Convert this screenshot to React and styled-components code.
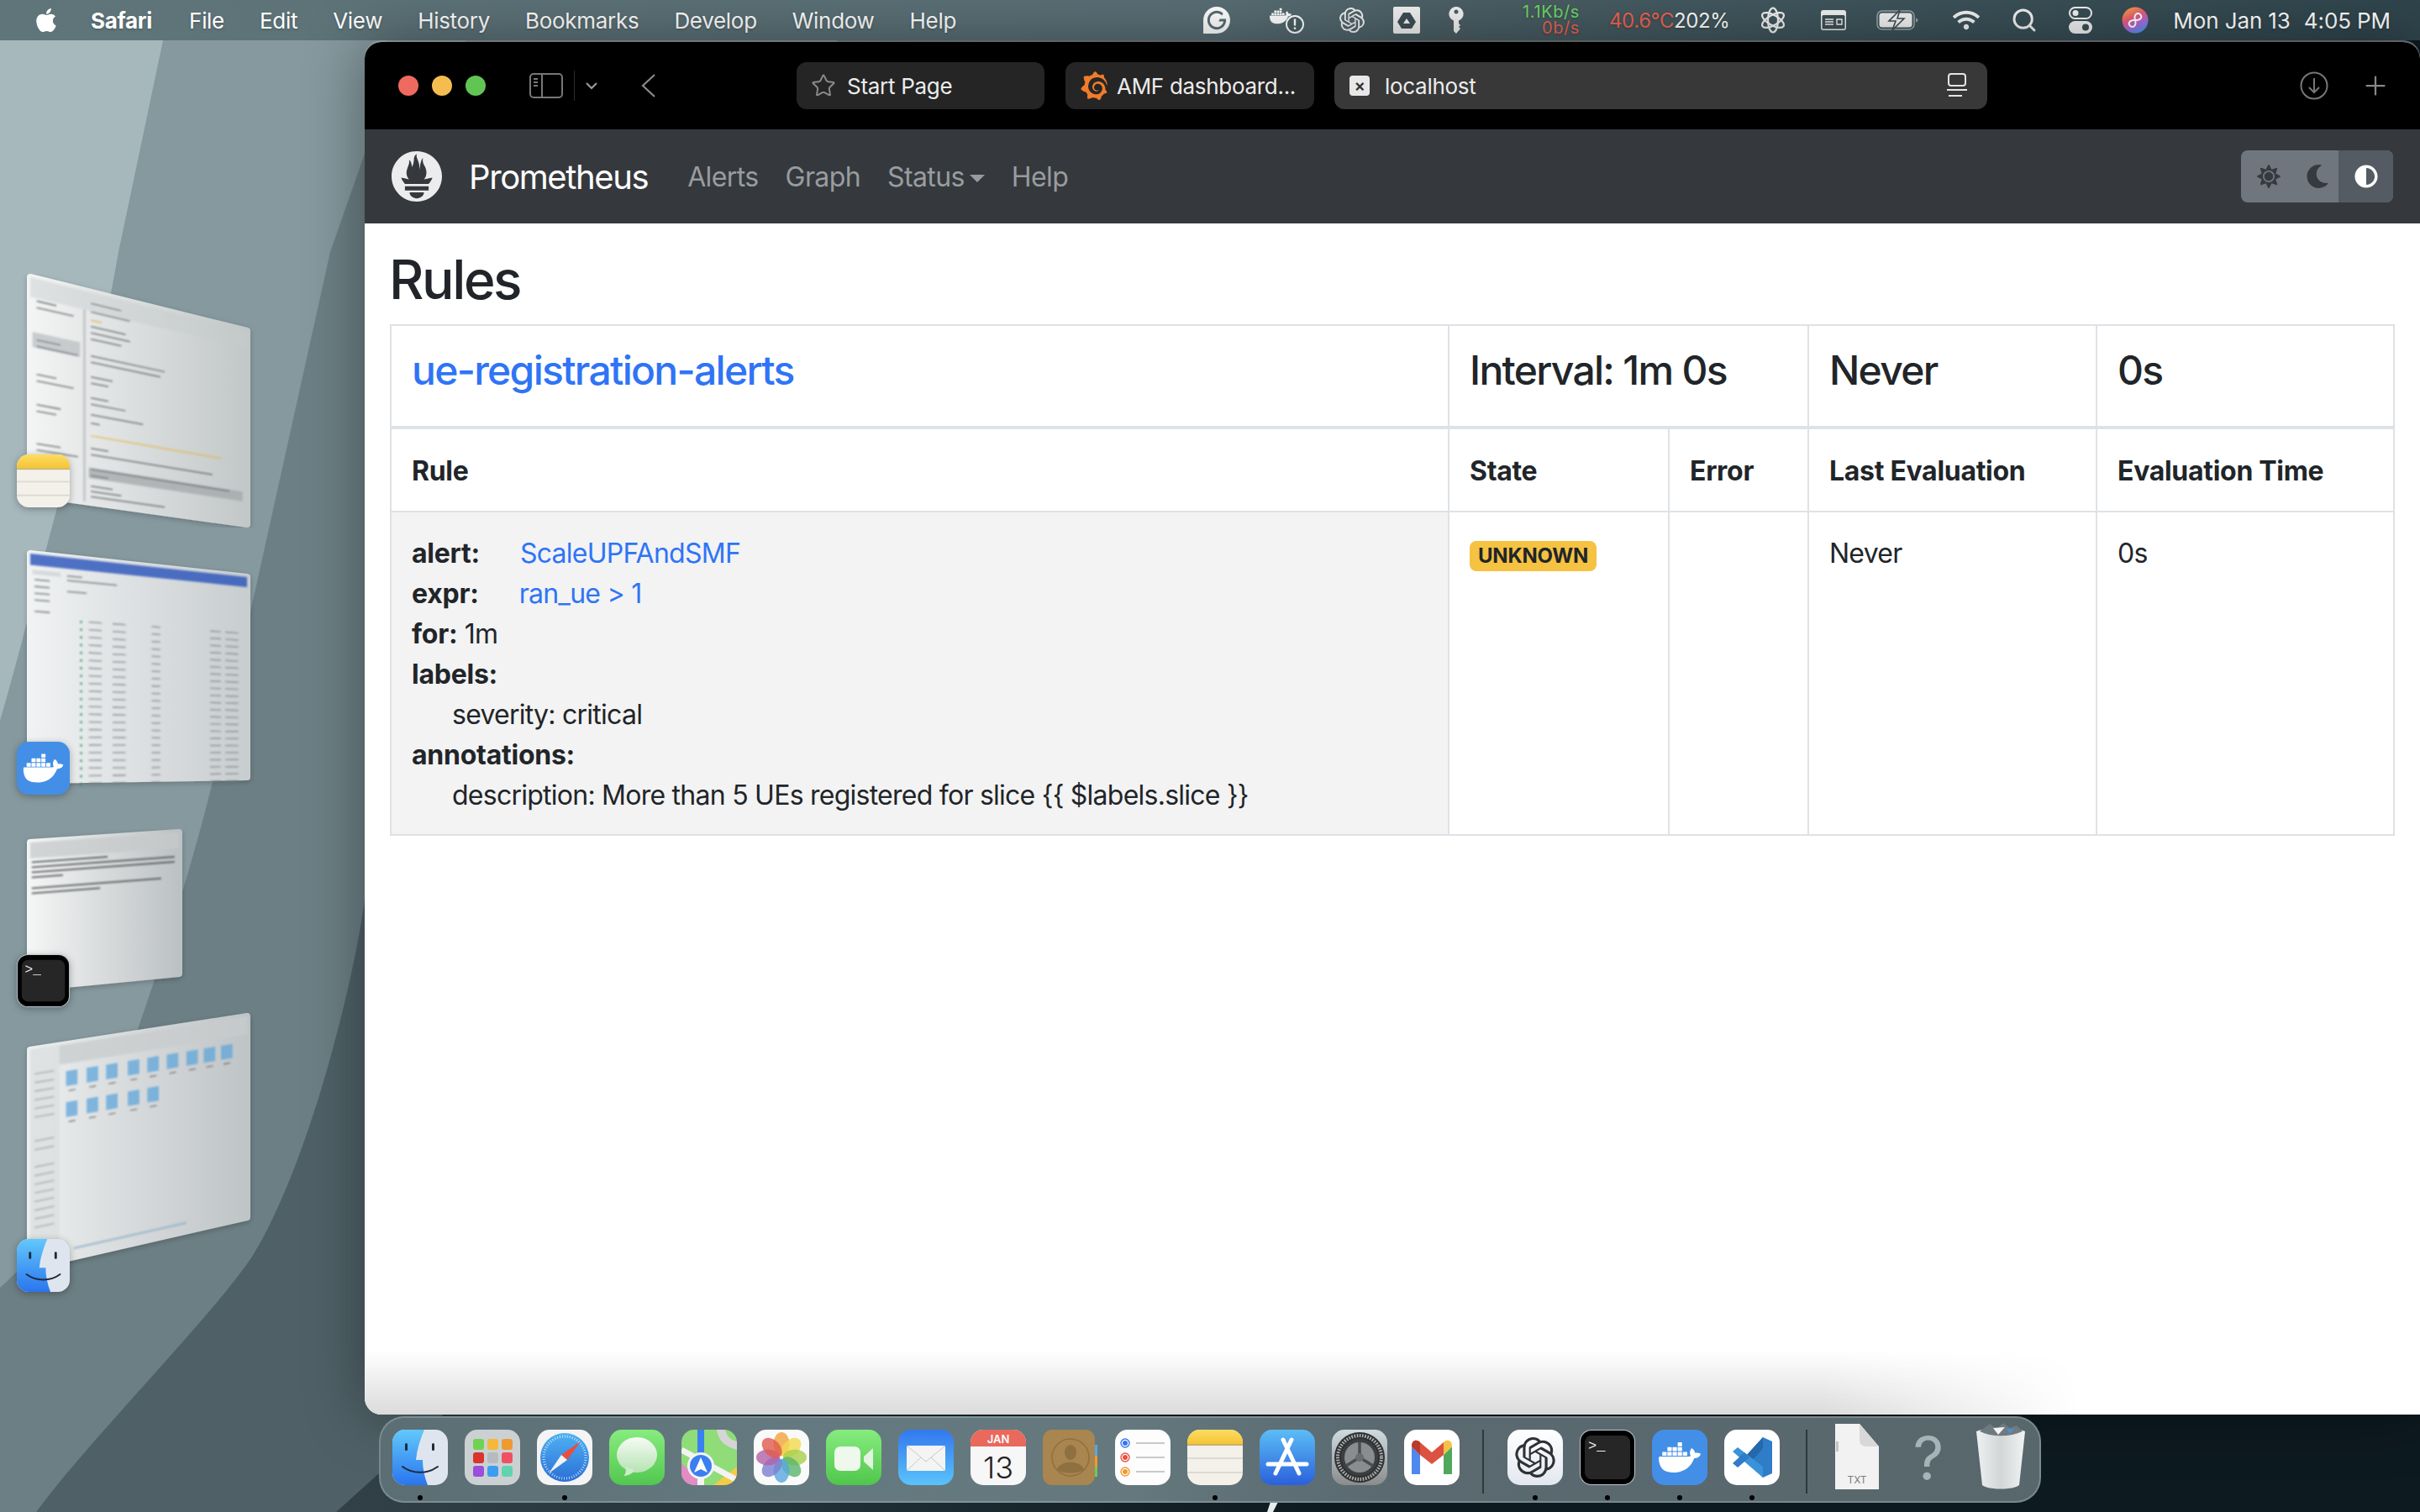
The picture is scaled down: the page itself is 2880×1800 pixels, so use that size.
import React from 'react';
import styled, { createGlobalStyle } from 'styled-components';
import { FaApple, FaSun, FaMoon, FaAdjust, FaWifi } from 'react-icons/fa';
import { SiPrometheus, SiGrafana, SiOpenai, SiDocker, SiGrammarly } from 'react-icons/si';
import { Search, Star, Plus } from 'lucide-react';

const GlobalStyle = createGlobalStyle`
  html, body {
    margin: 0;
    padding: 0;
    background: #0e1b21;
  }
  * {
    box-sizing: border-box;
  }
`;

const Desktop = styled.div`
  position: relative;
  width: 2880px;
  height: 1800px;
  overflow: hidden;
  font-family: Inter, "Liberation Sans", sans-serif;
  color: #212529;
`;

const WallpaperSvg = styled.svg`
  position: absolute;
  left: 0;
  top: 0;
`;

/* ---------- menu bar ---------- */

const MenuBar = styled.header`
  position: relative;
  display: flex;
  align-items: center;
  height: 48px;
  padding: 0 35px 0 39px;
  background: linear-gradient(90deg, #5f757a 0%, #586e74 50%, #4a5e64 60%, #3e545b 75%, #2f444c 100%);
  color: #fff;
  font-size: 26px;
  letter-spacing: -0.3px;
  text-shadow: 0 1px 3px rgba(0, 0, 0, 0.25);
`;

const MenuLeft = styled.nav`
  display: flex;
  align-items: center;
  gap: 42px;
`;

const AppleSlot = styled.span`
  display: flex;
  margin-right: -5px;
`;

const MenuItem = styled.span`
  font-weight: ${(p) => (p.$bold ? 700 : 400)};
  margin-right: ${(p) => (p.$bold ? 2 : 0)}px;
  white-space: nowrap;
`;

const MenuRight = styled.div`
  display: flex;
  align-items: center;
  margin-left: auto;
`;

const StatusSlot = styled.span`
  display: flex;
  justify-content: ${(p) => p.$justify || 'center'};
  align-items: center;
  width: ${(p) => p.$w}px;
  margin-left: ${(p) => p.$ml || 0}px;
  white-space: nowrap;
`;

const NetStack = styled.span`
  display: flex;
  flex-direction: column;
  align-items: flex-end;
  font-size: 20px;
  line-height: 19px;
  letter-spacing: 0.6px;
  color: #6fd764;
`;

const NetDown = styled.span`
  color: #ee6152;
`;

const TempText = styled.span`
  font-size: 24px;
  letter-spacing: -0.4px;
  color: #fff;
`;

const TempHot = styled.span`
  color: #ee6152;
`;

const Clock = styled.span`
  display: flex;
  gap: 16px;
  font-size: 26px;
  letter-spacing: -0.1px;
`;

/* ---------- stage manager strip ---------- */

const Workspace = styled.div`
  position: relative;
  display: flex;
  height: 1752px;
`;

const StageColumn = styled.aside`
  display: flex;
  flex-direction: column;
  flex: 0 0 434px;
  padding-top: 278px;
`;

const StageItem = styled.div`
  position: relative;
  width: 310px;
  height: ${(p) => p.$h}px;
  margin-bottom: ${(p) => p.$gap}px;
`;

const StageBadge = styled.span`
  position: absolute;
  left: 20px;
  top: ${(p) => p.$top}px;
  filter: drop-shadow(0 2px 4px rgba(0, 0, 0, 0.3));
`;

/* ---------- browser window ---------- */

const BrowserWindow = styled.main`
  display: flex;
  flex-direction: column;
  flex: 1;
  height: 1634px;
  margin-top: 2px;
  border-radius: 20px 20px 0 20px;
  overflow: hidden;
  background: #fff;
  box-shadow: 0 0 70px rgba(0, 0, 0, 0.38), 0 -2px 0 rgba(190, 190, 190, 0.55);
`;

const Toolbar = styled.div`
  display: flex;
  align-items: center;
  flex: 0 0 104px;
  padding-left: 40px;
  background: #000;
`;

const Lights = styled.div`
  display: flex;
  gap: 16px;
  margin-right: 52px;
`;

const Light = styled.span`
  width: 24px;
  height: 24px;
  border-radius: 50%;
  background: ${(p) => p.$color};
`;

const ToolIcon = styled.span`
  display: flex;
  margin-left: ${(p) => p.$ml || 0}px;
`;

const ToolDivider = styled.span`
  width: 1px;
  height: 36px;
  margin-left: 13px;
  background: #2b2b2b;
`;

const Tab = styled.div`
  display: flex;
  align-items: center;
  width: ${(p) => p.$w}px;
  height: 56px;
  margin-left: ${(p) => p.$ml}px;
  padding: 0 ${(p) => p.$pr || 12}px 0 ${(p) => p.$pl}px;
  border-radius: 12px;
  background: ${(p) => (p.$active ? '#383838' : '#252525')};
  color: #ececec;
  font-size: 26px;
  letter-spacing: -0.3px;
  white-space: nowrap;
`;

const TabLabel = styled.span`
  margin-left: ${(p) => p.$ml}px;
  flex: 1;
`;

const FavClose = styled.span`
  display: flex;
  align-items: center;
  justify-content: center;
  width: 24px;
  height: 24px;
  border-radius: 4px;
  background: #e8e8e8;
  color: #333;
  font-size: 20px;
  font-weight: 600;
  line-height: 1;
`;

const NavBar = styled.nav`
  display: flex;
  align-items: center;
  flex: 0 0 112px;
  padding: 0 32px;
  background: #35393d;
`;

const Brand = styled.span`
  margin-left: 32px;
  margin-right: 31px;
  color: #fff;
  font-size: 40px;
  letter-spacing: -1.4px;
`;

const NavLink = styled.span`
  padding: 0 16px;
  color: #999c9f;
  font-size: 32px;
  letter-spacing: -0.6px;
`;

const Caret = styled.span`
  display: inline-block;
  margin-left: 6px;
  vertical-align: 5px;
  border-top: 9px solid;
  border-right: 9px solid transparent;
  border-left: 9px solid transparent;
`;

const ThemeToggle = styled.div`
  display: flex;
  margin-left: auto;
  height: 62px;
  border-radius: 8px;
  overflow: hidden;
  background: #6f767e;
`;

const ThemeButton = styled.span`
  display: flex;
  align-items: center;
  justify-content: center;
  width: ${(p) => p.$w}px;
  background: ${(p) => (p.$active ? '#545b62' : 'transparent')};
  color: ${(p) => (p.$active ? '#fff' : '#343a40')};
`;

/* ---------- rules page ---------- */

const Content = styled.section`
  position: relative;
  flex: 1;
  padding: 29px 30px 0 29px;
  background: #fff;

  &::after {
    content: "";
    position: absolute;
    left: 0;
    bottom: 0;
    width: 2040px;
    height: 76px;
    background: linear-gradient(180deg, rgba(0, 0, 0, 0) 0%, rgba(0, 0, 0, 0.14) 100%);
    -webkit-mask-image: linear-gradient(90deg, #000 85%, transparent 100%);
    mask-image: linear-gradient(90deg, #000 85%, transparent 100%);
  }
`;

const PageTitle = styled.h2`
  margin: 0 0 14px;
  font-size: 64px;
  line-height: 1.2;
  font-weight: 500;
  letter-spacing: -2.4px;
`;

const RulesTable = styled.table`
  width: 2384px;
  margin-left: 1px;
  table-layout: fixed;
  border-collapse: collapse;
  font-size: 32px;
  line-height: 48px;
  letter-spacing: -0.75px;
`;

const Col = styled.col`
  width: ${(p) => p.$w}px;
`;

const Cell = styled.td`
  padding: 24px;
  border: 2px solid #dee2e6;
  vertical-align: top;
  background: #fff;
`;

const BodyCell = styled(Cell)`
  padding: 25px 24px 22px;
  background: ${(p) => (p.$shaded ? '#f3f3f3' : '#fff')};
`;

const HeadRow = styled.tr`
  & > td {
    border-bottom-width: 4px;
  }
`;

const HeadCell = styled.th`
  padding: 26px 24px 23px;
  border: 2px solid #dee2e6;
  border-top: 0;
  text-align: left;
  font-weight: 700;
  letter-spacing: -0.3px;
  background: #fff;
`;

const GroupTitle = styled.h4`
  margin: 0 0 14px;
  font-size: 48px;
  line-height: 1.2;
  font-weight: 500;
  letter-spacing: -1.7px;
`;

const GroupLink = styled.span`
  color: #2f74f6;
`;

const RuleLine = styled.div`
  padding-left: ${(p) => (p.$indent ? 48 : 0)}px;
`;

const RuleKey = styled.b`
  font-weight: 700;
  letter-spacing: -0.25px;
`;

const RuleLink = styled.span`
  margin-left: ${(p) => p.$ml}px;
  color: #2f74f6;
`;

const Badge = styled.span`
  display: inline-block;
  height: 36px;
  margin-top: 9px;
  padding: 0 10px;
  border-radius: 8px;
  background: #f5c242;
  font-size: 24px;
  font-weight: 700;
  line-height: 36px;
  letter-spacing: -0.2px;
  vertical-align: top;
`;

/* ---------- dock ---------- */

const Dock = styled.footer`
  position: absolute;
  left: 451px;
  top: 1686px;
  display: flex;
  align-items: flex-start;
  width: 1978px;
  height: 103px;
  padding: 14px 0 0 14px;
  border: 2px solid rgba(190, 205, 208, 0.32);
  border-radius: 30px;
  background: linear-gradient(90deg, #5a6e74 0%, #657a80 25%, #64787e 45%, #5a6a70 60%, #58676c 100%);
`;

const DockSlot = styled.div`
  position: relative;
  flex: 0 0 66px;
  height: 66px;
  margin-right: ${(p) => p.$mr ?? 20}px;
`;

const RunningDot = styled.span`
  position: absolute;
  left: 30px;
  top: 78px;
  width: 6px;
  height: 6px;
  border-radius: 50%;
  background: #000;
`;

const DockDivider = styled.span`
  flex: 0 0 2px;
  height: 76px;
  margin: 0 ${(p) => p.$mr}px 0 ${(p) => p.$ml}px;
  background: #2c383c;
`;

/* ---------- drawings ---------- */

const TileSvg = styled.svg`
  display: block;
  overflow: visible;
`;

const Tile = ({ size = 66, children }) => (
  <TileSvg width={size} height={size} viewBox="0 0 66 66">{children}</TileSvg>
);

const DockText = styled.text`
  font-family: Inter, "Liberation Sans", sans-serif;
`;

const MonoText = styled.text`
  font-family: "Liberation Mono", monospace;
`;

const FinderIcon = ({ size }) => (
  <Tile size={size}>
    <defs>
      <linearGradient id="fnd" x1="0" y1="0" x2="0" y2="1">
        <stop offset="0" stopColor="#62c8fb" />
        <stop offset="1" stopColor="#2a75ee" />
      </linearGradient>
      <clipPath id="fndc"><rect width="66" height="66" rx="15" /></clipPath>
    </defs>
    <g clipPath="url(#fndc)">
      <rect width="66" height="66" fill="#dfe5ef" />
      <path d="M0 0H38C33 12 29 24 28 36H36C36 46 38 56 42 66H0Z" fill="url(#fnd)" />
    </g>
    <rect x="15" y="16" width="3" height="9" rx="1.5" fill="#1d2b3a" />
    <rect x="47" y="16" width="3" height="9" rx="1.5" fill="#1d2b3a" />
    <path d="M12 44C24 53 42 53 54 44" fill="none" stroke="#1d2b3a" strokeWidth="2" strokeLinecap="round" />
  </Tile>
);

const LaunchpadIcon = () => {
  const colors = ['#6fd34f', '#f4b93a', '#ef9a2e', '#d9352c', '#b4bcc0', '#ef5162', '#9b4ddb', '#3a9df2', '#62d3ae'];
  return (
    <Tile>
      <rect width="66" height="66" rx="15" fill="#cbd1d3" />
      {colors.map((c, i) => (
        <rect key={c} x={10 + (i % 3) * 17} y={11 + Math.floor(i / 3) * 16} width="13" height="13" rx="3" fill={c} />
      ))}
    </Tile>
  );
};

const SafariIcon = () => (
  <Tile>
    <defs>
      <linearGradient id="saf" x1="0" y1="0" x2="0" y2="1">
        <stop offset="0" stopColor="#4fb2f2" />
        <stop offset="1" stopColor="#2a6fd6" />
      </linearGradient>
    </defs>
    <rect width="66" height="66" rx="15" fill="#f4f4f4" />
    <circle cx="33" cy="33" r="29" fill="url(#saf)" />
    <circle cx="33" cy="33" r="25" fill="none" stroke="#d8ecfb" strokeWidth="3" strokeDasharray="0.8 2.2" />
    <path d="M52 14L29 30L36 36Z" fill="#ef4b3c" />
    <path d="M14 52L29 30L36 36Z" fill="#f2f2f2" />
  </Tile>
);

const MessagesIcon = () => (
  <Tile>
    <defs>
      <linearGradient id="msg" x1="0" y1="0" x2="0" y2="1">
        <stop offset="0" stopColor="#86ec7e" />
        <stop offset="1" stopColor="#52c750" />
      </linearGradient>
      <linearGradient id="bub" x1="0" y1="0" x2="0" y2="1">
        <stop offset="0" stopColor="#f6fbf5" />
        <stop offset="1" stopColor="#b5e3b2" />
      </linearGradient>
    </defs>
    <rect width="66" height="66" rx="15" fill="url(#msg)" />
    <ellipse cx="33" cy="30" rx="24" ry="21" fill="url(#bub)" />
    <path d="M20 44C20 50 19 54 17 55C23 55 28 52 30 48Z" fill="#cdeccb" />
  </Tile>
);

const MapsIcon = () => (
  <Tile>
    <defs><clipPath id="mpc"><rect width="66" height="66" rx="15" /></clipPath></defs>
    <g clipPath="url(#mpc)">
      <rect width="66" height="66" fill="#8fdc78" />
      <path d="M0 40L28 66H0Z" fill="#e38bc4" />
      <path d="M38 66L66 44V66Z" fill="#f5cc45" />
      <path d="M0 24L66 60" stroke="#f3f3f3" strokeWidth="7" />
      <path d="M42 0C44 14 52 20 66 24V14C58 12 54 8 52 0Z" fill="#d5d5d5" />
      <rect x="19" y="0" width="8" height="30" fill="#3a7ff0" />
      <rect x="19" y="40" width="8" height="26" fill="#f3f3f3" />
      <circle cx="23" cy="43" r="16" fill="#f4f4f4" />
      <circle cx="23" cy="43" r="13" fill="#3a7ff0" />
      <path d="M23 33L31 51L23 47L15 51Z" fill="#fff" />
    </g>
  </Tile>
);

const PhotosIcon = () => {
  const petals = ['#f3a33c', '#f2d94e', '#a8cf4a', '#59b56c', '#5aa6de', '#7b7fd0', '#b262a8', '#e05a4d'];
  return (
    <Tile>
      <rect width="66" height="66" rx="15" fill="#fafafa" />
      {petals.map((c, i) => (
        <ellipse key={c} cx="33" cy="17" rx="9.5" ry="14" fill={c} fillOpacity="0.8" transform={`rotate(${i * 45} 33 33)`} />
      ))}
    </Tile>
  );
};

const FaceTimeIcon = () => (
  <Tile>
    <defs>
      <linearGradient id="ft" x1="0" y1="0" x2="0" y2="1">
        <stop offset="0" stopColor="#86ec7e" />
        <stop offset="1" stopColor="#50c64c" />
      </linearGradient>
    </defs>
    <rect width="66" height="66" rx="15" fill="url(#ft)" />
    <rect x="10" y="20" width="31" height="29" rx="7" fill="#eef8ec" />
    <path d="M45 32L56 22V48L45 38Z" fill="#e2f3df" />
  </Tile>
);

const MailIcon = () => (
  <Tile>
    <defs>
      <linearGradient id="ml" x1="0" y1="0" x2="0" y2="1">
        <stop offset="0" stopColor="#3378ee" />
        <stop offset="1" stopColor="#5ac4fa" />
      </linearGradient>
    </defs>
    <rect width="66" height="66" rx="15" fill="url(#ml)" />
    <rect x="10" y="19" width="46" height="30" rx="2" fill="#f4f4f4" />
    <path d="M10 19L33 38L56 19M10 49L27 33M56 49L39 33" fill="none" stroke="#c4c8cc" strokeWidth="1" />
  </Tile>
);

const CalendarIcon = () => (
  <Tile>
    <defs><clipPath id="clc"><rect width="66" height="66" rx="15" /></clipPath></defs>
    <g clipPath="url(#clc)">
      <rect width="66" height="66" fill="#f7f7f7" />
      <rect width="66" height="20" fill="#e9695c" />
    </g>
    <DockText x="33" y="16" textAnchor="middle" fontSize="13" fontWeight="600" fill="#fff">JAN</DockText>
    <DockText x="33" y="58" textAnchor="middle" fontSize="36" fontWeight="300" fill="#222">13</DockText>
  </Tile>
);

const ContactsIcon = () => (
  <Tile>
    <rect x="60" y="18" width="5" height="13" fill="#5aa6de" />
    <rect x="60" y="31" width="5" height="13" fill="#ef9a2e" />
    <rect x="60" y="44" width="5" height="12" fill="#6fc95a" />
    <rect x="0" y="0" width="62" height="66" rx="11" fill="#a9854f" />
    <circle cx="33" cy="33" r="22" fill="none" stroke="#8f7040" strokeWidth="1.5" />
    <ellipse cx="33" cy="27" rx="7" ry="9" fill="#8f7040" />
    <path d="M17 47C22 36 44 36 49 47C44 53 22 53 17 47Z" fill="#8f7040" />
  </Tile>
);

const RemindersIcon = () => (
  <Tile>
    <rect width="66" height="66" rx="15" fill="#fdfdfd" />
    {[['#3478f0', 16], ['#e8503f', 33], ['#ef9a2e', 50]].map(([c, y]) => (
      <g key={c}>
        <circle cx="12" cy={y} r="5" fill="#fff" stroke={c} strokeWidth="1.4" />
        <circle cx="12" cy={y} r="3" fill={c} />
        <rect x="25" y={y - 1} width="34" height="2" fill="#c9c9c9" />
      </g>
    ))}
  </Tile>
);

const NotesIcon = ({ size }) => (
  <Tile size={size}>
    <defs>
      <linearGradient id="nt" x1="0" y1="0" x2="0" y2="1">
        <stop offset="0" stopColor="#fcdc62" />
        <stop offset="1" stopColor="#f5c535" />
      </linearGradient>
      <clipPath id="ntc"><rect width="66" height="66" rx="15" /></clipPath>
    </defs>
    <g clipPath="url(#ntc)">
      <rect width="66" height="66" fill="#f4f1ea" />
      <rect width="66" height="17" fill="url(#nt)" />
      <rect y="17" width="66" height="2" fill="#c9b26a" />
      <rect y="33" width="66" height="2" fill="#dddad4" />
      <rect y="50" width="66" height="2" fill="#dddad4" />
    </g>
  </Tile>
);

const AppStoreIcon = () => (
  <Tile>
    <defs>
      <linearGradient id="aps" x1="0" y1="0" x2="0" y2="1">
        <stop offset="0" stopColor="#5cbdf5" />
        <stop offset="1" stopColor="#2a60dc" />
      </linearGradient>
    </defs>
    <rect width="66" height="66" rx="15" fill="url(#aps)" />
    <path d="M38 12L19 52M28 12L47 52" stroke="#fff" strokeWidth="5" strokeLinecap="round" fill="none" />
    <path d="M10 41H56" stroke="#fff" strokeWidth="5" strokeLinecap="round" />
  </Tile>
);

const SettingsIcon = () => (
  <Tile>
    <defs>
      <linearGradient id="stg" x1="0" y1="0" x2="0" y2="1">
        <stop offset="0" stopColor="#cfdbe0" />
        <stop offset="1" stopColor="#8a8c8c" />
      </linearGradient>
    </defs>
    <rect width="66" height="66" rx="15" fill="url(#stg)" />
    <circle cx="33" cy="33" r="30" fill="#2f3234" />
    <circle cx="33" cy="33" r="26" fill="none" stroke="#b0b2b3" strokeWidth="4" strokeDasharray="1.6 1.6" />
    <circle cx="33" cy="33" r="22" fill="#3c3f41" />
    <circle cx="33" cy="33" r="18" fill="#8a8d8f" />
    <path d="M33 33V15M33 33L17 43M33 33L49 43" stroke="#4b4e50" strokeWidth="3.5" />
    <circle cx="33" cy="33" r="5" fill="#6a6d6f" />
  </Tile>
);

const GmailIcon = () => (
  <Tile>
    <rect width="66" height="66" rx="15" fill="#fff" />
    <path d="M9 20V53H19V30Z" fill="#4f88ee" />
    <path d="M47 30V53H57V20Z" fill="#50a85c" />
    <path d="M9 20C9 12 15 11 19 15L33 27L47 15L47 30L33 41L19 30Z" fill="#dd5140" />
    <path d="M47 15C51 11 57 12 57 20L47 30Z" fill="#f5c242" />
    <path d="M9 20C9 12 15 11 19 15V30Z" fill="#b93a2c" />
  </Tile>
);

const ChatGptIcon = () => (
  <Tile>
    <defs>
      <linearGradient id="cgt" x1="0" y1="0" x2="0" y2="1">
        <stop offset="0" stopColor="#fff" />
        <stop offset="1" stopColor="#e2e8f0" />
      </linearGradient>
    </defs>
    <rect width="66" height="66" rx="15" fill="url(#cgt)" />
    <SiOpenai x="9" y="9" size={48} color="#2f3134" />
  </Tile>
);

const TerminalIcon = ({ size }) => (
  <Tile size={size}>
    <rect width="66" height="66" rx="14" fill="#b9c7cb" />
    <rect x="1" y="1" width="64" height="64" rx="13" fill="#000" />
    <rect x="6" y="7" width="54" height="52" rx="8" fill="#262626" />
    <MonoText x="10" y="24" fontSize="17" fill="#f0f0f0">&gt;_</MonoText>
  </Tile>
);

const DockerIcon = ({ size }) => (
  <Tile size={size}>
    <rect width="66" height="66" rx="15" fill="#438fe7" />
    <SiDocker x="8" y="8" size={50} color="#fff" />
  </Tile>
);

const VsCodeIcon = () => (
  <Tile>
    <rect width="66" height="66" rx="15" fill="#fff" />
    <path d="M46 9L57 14V52L46 57L24 33Z" fill="#2f7cc9" />
    <path d="M46 9L27 30L34 36L46 22Z" fill="#2568ab" />
    <path d="M46 57L10 26L16 21L46 44Z" fill="#3a93d9" />
    <path d="M10 40L16 45L30 33L24 27Z" fill="#2f7cc9" />
  </Tile>
);

const TextFileIcon = () => (
  <Tile>
    <path d="M8 -7H37L60 20V71H8Z" fill="#f2f2f2" />
    <path d="M37 -7L60 20H46C40 20 37 17 37 12Z" fill="#d8d8d8" />
    <rect x="9" y="14" width="3" height="12" fill="#c4c4c4" />
    <DockText x="34" y="64" textAnchor="middle" fontSize="12" fill="#7c7c7c">TXT</DockText>
  </Tile>
);

const UnknownIcon = () => (
  <Tile>
    <DockText x="33" y="60" textAnchor="middle" fontSize="72" fontWeight="400" fill="#a6b3b7">?</DockText>
  </Tile>
);

const TrashIcon = () => (
  <Tile>
    <defs>
      <linearGradient id="tr" x1="0" y1="0" x2="1" y2="0">
        <stop offset="0" stopColor="#eef1f1" />
        <stop offset="0.5" stopColor="#d2d6d7" />
        <stop offset="1" stopColor="#f1f3f3" />
      </linearGradient>
    </defs>
    <path d="M4 2C18 -3 48 -3 62 2L55 66C48 72 18 72 11 66Z" fill="url(#tr)" />
    <path d="M8 2L20 -7L28 -1L36 -8L44 -2L52 -5L59 2C44 9 22 9 8 2Z" fill="#6f7a80" />
    <path d="M24 -2L30 6L38 -3Z" fill="#f4f4f4" />
    <path d="M40 -1L44 5L49 -1Z" fill="#4a90c8" />
  </Tile>
);

const dockLeft = [
  { id: 'finder', Icon: FinderIcon, running: true },
  { id: 'launchpad', Icon: LaunchpadIcon },
  { id: 'safari', Icon: SafariIcon, running: true },
  { id: 'messages', Icon: MessagesIcon },
  { id: 'maps', Icon: MapsIcon },
  { id: 'photos', Icon: PhotosIcon },
  { id: 'facetime', Icon: FaceTimeIcon },
  { id: 'mail', Icon: MailIcon },
  { id: 'calendar', Icon: CalendarIcon },
  { id: 'contacts', Icon: ContactsIcon },
  { id: 'reminders', Icon: RemindersIcon },
  { id: 'notes', Icon: NotesIcon, running: true },
  { id: 'appstore', Icon: AppStoreIcon },
  { id: 'settings', Icon: SettingsIcon },
  { id: 'gmail', Icon: GmailIcon },
];

const dockRecent = [
  { id: 'chatgpt', Icon: ChatGptIcon },
  { id: 'terminal', Icon: TerminalIcon },
  { id: 'docker', Icon: DockerIcon },
  { id: 'vscode', Icon: VsCodeIcon },
];

const dockFiles = [
  { id: 'txt', Icon: TextFileIcon },
  { id: 'unknown', Icon: UnknownIcon },
  { id: 'trash', Icon: TrashIcon },
];

const Wallpaper = () => (
  <WallpaperSvg width="2880" height="1800" viewBox="0 0 2880 1800">
    <defs>
      <linearGradient id="wpBase" x1="0" y1="0" x2="1" y2="0">
        <stop offset="0" stopColor="#3c4c52" />
        <stop offset="0.3" stopColor="#24343a" />
        <stop offset="0.55" stopColor="#0d1a20" />
        <stop offset="1" stopColor="#0d1a20" />
      </linearGradient>
    </defs>
    <rect width="2880" height="1800" fill="url(#wpBase)" />
    <path d="M0 0H1000L900 1200C760 1480 600 1620 400 1800H0Z" fill="#4f6167" />
    <path d="M0 0H560L433 1078C415 1200 360 1400 300 1496C250 1570 110 1710 43 1800H0Z" fill="#6c7f84" />
    <path d="M0 0H470L434 183L393 300L260 900C230 1040 130 1350 67 1455C45 1490 20 1515 0 1533Z" fill="#85999e" />
    <path d="M0 0H204L194 48L141 300C120 420 95 520 67 608C45 690 20 790 0 858Z" fill="#a6b8bc" />
    <path d="M1512 1788H1521L1515 1800H1508Z" fill="#e8eced" />
  </WallpaperSvg>
);

// bilinear map from the unit square onto the window's tilted outline
const quadMap = (q) => (u, v) => [
  (1 - u) * (1 - v) * q[0][0] + u * (1 - v) * q[1][0] + u * v * q[2][0] + (1 - u) * v * q[3][0],
  (1 - u) * (1 - v) * q[0][1] + u * (1 - v) * q[1][1] + u * v * q[2][1] + (1 - u) * v * q[3][1],
];

const quadPath = (q, u0, v0, u1, v1) => {
  const m = quadMap(q);
  const pts = [m(u0, v0), m(u1, v0), m(u1, v1), m(u0, v1)];
  return `M${pts.map((p) => p.map((n) => n.toFixed(1)).join(' ')).join('L')}Z`;
};

const ThumbBase = ({ id, quad, width, height, body, children }) => (
  <svg width={width} height={height} viewBox={`0 0 ${width} ${height}`}>
    <defs>
      <linearGradient id={`${id}g`} x1="0" y1="0" x2="1" y2="0">
        <stop offset="0" stopColor={body[0]} />
        <stop offset="1" stopColor={body[1]} />
      </linearGradient>
      <filter id={`${id}b`} x="-5%" y="-5%" width="110%" height="110%">
        <feGaussianBlur stdDeviation="0.8" />
      </filter>
      <filter id={`${id}s`} x="-10%" y="-10%" width="120%" height="120%">
        <feDropShadow dx="0" dy="2" stdDeviation="3" floodColor="#000" floodOpacity="0.22" />
      </filter>
    </defs>
    <path
      d={quadPath(quad, 0, 0, 1, 1)}
      fill={`url(#${id}g)`}
      stroke={`url(#${id}g)`}
      strokeWidth="8"
      strokeLinejoin="round"
      filter={`url(#${id}s)`}
    />
    <g filter={`url(#${id}b)`} opacity="0.75">{children}</g>
  </svg>
);

const TextLines = ({ quad, rows, color = '#4c5154', h = 0.006 }) => (
  <>
    {rows.map(([u0, v, u1, c]) => (
      <path key={`${u0}-${v}`} d={quadPath(quad, u0, v, u1, v + h)} fill={c || color} />
    ))}
  </>
);

const notesQuad = [[36, 4], [294, 68], [294, 298], [36, 262]];
const notesRows = [
  [0.28, 0.05, 0.42], [0.28, 0.09, 0.46], [0.28, 0.13, 0.33, '#e3a92d'], [0.28, 0.16, 0.44], [0.28, 0.19, 0.46], [0.28, 0.22, 0.42],
  [0.28, 0.3, 0.62], [0.28, 0.33, 0.6], [0.28, 0.4, 0.38], [0.28, 0.43, 0.36], [0.28, 0.5, 0.36], [0.28, 0.53, 0.44],
  [0.28, 0.58, 0.52], [0.28, 0.62, 0.32], [0.28, 0.68, 0.88, '#e3b13a'], [0.28, 0.74, 0.36], [0.28, 0.77, 0.84],
  [0.28, 0.84, 0.92], [0.28, 0.87, 0.36], [0.28, 0.92, 0.38], [0.28, 0.945, 0.42], [0.28, 0.97, 0.62],
  [0.03, 0.1, 0.12], [0.03, 0.13, 0.2], [0.03, 0.28, 0.14], [0.03, 0.31, 0.22], [0.03, 0.44, 0.12], [0.03, 0.47, 0.2],
  [0.03, 0.58, 0.14], [0.03, 0.61, 0.12], [0.03, 0.76, 0.14], [0.03, 0.79, 0.22],
];

const NotesThumb = () => (
  <ThumbBase id="tn" quad={notesQuad} width={310} height={302} body={['#f3f4f4', '#c2c7c8']}>
    <path d={quadPath(notesQuad, 0, 0, 1, 0.09)} fill="#c6cbcc" fillOpacity="0.6" />
    <path d={quadPath(notesQuad, 0.01, 0.25, 0.23, 0.32)} fill="#bcc0c2" />
    <path d={quadPath(notesQuad, 0.245, 0.09, 0.255, 1)} fill="#b3b8ba" />
    <path d={quadPath(notesQuad, 0.27, 0.835, 0.98, 0.885)} fill="#a4a8aa" />
    <TextLines quad={notesQuad} rows={notesRows} />
  </ThumbBase>
);

const dockerQuad = [[36, 4], [294, 32], [294, 270], [36, 274]];
const dockerRows = Array.from({ length: 22 }, (_, i) => 0.18 + i * 0.035);

const DockerThumb = () => (
  <ThumbBase id="td" quad={dockerQuad} width={310} height={291} body={['#f0f2f3', '#c8cdcf']}>
    <path d={quadPath(dockerQuad, 0, 0, 1, 0.05)} fill="#1f49b8" />
    <path d={quadPath(dockerQuad, 0.01, 0.07, 0.14, 0.09)} fill="#cfd3d5" />
    <TextLines
      quad={dockerQuad}
      color="#5a6064"
      rows={[[0.17, 0.08, 0.24], [0.17, 0.1, 0.4], [0.17, 0.15, 0.26], [0.02, 0.11, 0.09], [0.02, 0.14, 0.09], [0.02, 0.17, 0.09], [0.02, 0.2, 0.09], [0.02, 0.25, 0.09]]}
    />
    {dockerRows.map((v) => (
      <g key={v}>
        <path d={quadPath(dockerQuad, 0.23, v + 0.1, 0.24, v + 0.11)} fill="#1f8a5a" />
        <TextLines
          quad={dockerQuad}
          color="#7a8084"
          rows={[[0.27, v + 0.1, 0.33], [0.38, v + 0.1, 0.44], [0.56, v + 0.1, 0.6], [0.83, v + 0.1, 0.88], [0.9, v + 0.1, 0.96]]}
        />
      </g>
    ))}
  </ThumbBase>
);

const termQuad = [[36, 16], [213, 4], [213, 172], [36, 189]];

const TerminalThumb = () => (
  <ThumbBase id="tt" quad={termQuad} width={310} height={210} body={['#f4f5f5', '#bcc1c3']}>
    <path d={quadPath(termQuad, 0, 0, 1, 0.11)} fill="#c7cacb" />
    <TextLines
      quad={termQuad}
      color="#3c3f41"
      h={0.012}
      rows={[[0.01, 0.13, 0.52], [0.01, 0.165, 0.97], [0.01, 0.2, 0.97], [0.01, 0.235, 0.22], [0.01, 0.31, 0.88], [0.01, 0.345, 0.47]]}
    />
  </ThumbBase>
);

const finderQuad = [[36, 44], [294, 4], [294, 243], [36, 302]];
const folderCells = [
  [0.165, 0.125], [0.26, 0.125], [0.35, 0.125], [0.45, 0.125], [0.54, 0.125], [0.63, 0.125], [0.72, 0.125], [0.8, 0.125], [0.88, 0.125],
  [0.165, 0.27], [0.26, 0.27], [0.35, 0.27], [0.45, 0.27], [0.54, 0.27],
];

const FinderThumb = () => (
  <ThumbBase id="tf" quad={finderQuad} width={310} height={332} body={['#eceeef', '#bfc4c6']}>
    <path d={quadPath(finderQuad, 0, 0, 1, 0.09)} fill="#c8cccd" />
    <path d={quadPath(finderQuad, 0, 0, 0.135, 1)} fill="#dcdfe0" />
    {folderCells.map(([u, v]) => (
      <g key={`${u}-${v}`}>
        <path d={quadPath(finderQuad, u, v, u + 0.053, v + 0.07)} fill="#5ea6da" />
        <path d={quadPath(finderQuad, u + 0.012, v + 0.09, u + 0.043, v + 0.095)} fill="#555" />
      </g>
    ))}
    <TextLines
      quad={finderQuad}
      color="#a3a8ab"
      h={0.008}
      rows={[0.11, 0.15, 0.19, 0.23, 0.27, 0.31, 0.42, 0.46, 0.54, 0.58, 0.62, 0.66, 0.7, 0.74, 0.78, 0.82].map((v) => [0.02, v, 0.11])}
    />
    <path d={quadPath(finderQuad, 0.2, 0.955, 0.72, 0.965)} fill="#8fb0c8" />
  </ThumbBase>
);

const SidebarGlyph = () => (
  <svg width="40" height="30" viewBox="0 0 40 30" fill="none" stroke="#777" strokeWidth="2">
    <rect x="1" y="1" width="38" height="28" rx="4" />
    <path d="M15 1V29" />
    <path d="M5 7H10M5 11H10M5 15H10" />
  </svg>
);

const SmallChevron = () => (
  <svg width="16" height="12" viewBox="0 0 16 12" fill="none" stroke="#9a9a9a" strokeWidth="2.2">
    <path d="M2 3L8 9L14 3" />
  </svg>
);

const BackChevron = () => (
  <svg width="18" height="30" viewBox="0 0 18 30" fill="none" stroke="#8a8a8a" strokeWidth="2.2">
    <path d="M16 2L2 15L16 28" />
  </svg>
);

const TabOverviewGlyph = () => (
  <svg width="24" height="30" viewBox="0 0 24 30" fill="none" stroke="#e4e4e4" strokeWidth="2">
    <rect x="2" y="1" width="20" height="14" rx="3" />
    <path d="M0 20H24M2 27H18" />
  </svg>
);

const DockerStatus = () => (
  <svg width="44" height="36" viewBox="0 0 44 36">
    <SiDocker x="0" y="0" width="30" height="30" color="#fff" />
    <circle cx="30" cy="23" r="10" fill="#4a5f65" stroke="#fff" strokeWidth="2" />
    <rect x="28.8" y="16.5" width="2.4" height="8" fill="#fff" />
    <rect x="28.8" y="26.5" width="2.4" height="2.4" fill="#fff" />
  </svg>
);

const DriveStatus = () => (
  <svg width="32" height="32" viewBox="0 0 32 32">
    <rect width="32" height="32" rx="2" fill="#f0f0f0" />
    <path d="M12 7H20L27 18L22 26H10L5 18Z" fill="#3d4f55" />
    <path d="M16 14L20 20H12Z" fill="#f0f0f0" />
  </svg>
);

const KeyStatus = () => (
  <svg width="18" height="32" viewBox="0 0 18 32" fill="#f0f0f0">
    <path d="M9 0A8.5 8.5 0 0 1 12 16.5V20L14 22L12 24L14 26L9 32L6 29V16.5A8.5 8.5 0 0 1 9 0Z" />
    <circle cx="9" cy="6" r="2.5" fill="#4a5f65" />
  </svg>
);

const RingStatus = () => (
  <svg width="32" height="32" viewBox="0 0 32 32" fill="none" stroke="#f0f0f0" strokeWidth="2.2">
    <ellipse cx="16" cy="16" rx="6" ry="14.5" />
    <ellipse cx="16" cy="16" rx="6" ry="14.5" transform="rotate(60 16 16)" />
    <ellipse cx="16" cy="16" rx="6" ry="14.5" transform="rotate(120 16 16)" />
  </svg>
);

const WindowStatus = () => (
  <svg width="30" height="24" viewBox="0 0 30 24">
    <rect width="30" height="24" rx="3" fill="#f0f0f0" />
    <rect x="1.5" y="6" width="27" height="16.5" rx="1.5" fill="#3d4f55" />
    <path d="M5 11H15M5 14H15M5 17H15M19 11H25V17H19Z" fill="none" stroke="#f0f0f0" strokeWidth="1.4" />
  </svg>
);

const BatteryStatus = () => (
  <svg width="50" height="24" viewBox="0 0 50 24">
    <rect x="1" y="1" width="44" height="22" rx="6" fill="none" stroke="#9aa4a8" strokeWidth="1.6" />
    <rect x="3.5" y="3.5" width="39" height="17" rx="3.5" fill="#f0f0f0" />
    <path d="M47 9L50 12L47 15Z" fill="#9aa4a8" />
    <path d="M28 0L15 13H23L19 24L33 10H25Z" fill="#f0f0f0" stroke="#3d4f55" strokeWidth="1.6" />
  </svg>
);

const ToggleStatus = () => (
  <svg width="28" height="32" viewBox="0 0 28 32">
    <rect x="1" y="1" width="26" height="13" rx="6.5" fill="none" stroke="#f0f0f0" strokeWidth="2" />
    <circle cx="8" cy="7.5" r="3.5" fill="#f0f0f0" />
    <rect y="17" width="28" height="15" rx="7.5" fill="#f0f0f0" />
    <circle cx="20" cy="24.5" r="4" fill="#3d4f55" />
  </svg>
);

const SiriStatus = () => (
  <svg width="32" height="32" viewBox="0 0 32 32">
    <defs>
      <linearGradient id="siri" x1="0.2" y1="0" x2="0.7" y2="1">
        <stop offset="0" stopColor="#f2a33c" />
        <stop offset="0.4" stopColor="#ea5a78" />
        <stop offset="0.7" stopColor="#a66be0" />
        <stop offset="1" stopColor="#3f9ff0" />
      </linearGradient>
    </defs>
    <circle cx="16" cy="16" r="15.5" fill="url(#siri)" />
    <path
      d="M16 16C12 10 7 12 7 16C7 20 12 22 16 16C20 10 25 12 25 16C25 20 20 22 16 16Z"
      fill="none"
      stroke="#fff"
      strokeWidth="2"
      transform="rotate(-50 16 16)"
    />
  </svg>
);

const DockEntry = ({ entry, mr, running }) => (
  <DockSlot $mr={mr}>
    <entry.Icon />
    {running && <RunningDot />}
  </DockSlot>
);

export default function App() {
  return (
    <Desktop>
      <GlobalStyle />
      <Wallpaper />

      <MenuBar>
        <MenuLeft>
          <AppleSlot><FaApple size={32} /></AppleSlot>
          <MenuItem $bold>Safari</MenuItem>
          {['File', 'Edit', 'View', 'History', 'Bookmarks', 'Develop', 'Window', 'Help'].map((item) => (
            <MenuItem key={item}>{item}</MenuItem>
          ))}
        </MenuLeft>
        <MenuRight>
          <StatusSlot $w={80}><SiGrammarly size={32} /></StatusSlot>
          <StatusSlot $w={90}><DockerStatus /></StatusSlot>
          <StatusSlot $w={62}><SiOpenai size={30} color="#f0f0f0" /></StatusSlot>
          <StatusSlot $w={68}><DriveStatus /></StatusSlot>
          <StatusSlot $w={50}><KeyStatus /></StatusSlot>
          <StatusSlot $w={122} $justify="flex-end">
            <NetStack>
              <span>1.1Kb/s</span>
              <NetDown>0b/s</NetDown>
            </NetStack>
          </StatusSlot>
          <StatusSlot $w={159} $ml={35} $justify="flex-start">
            <TempText><TempHot>40.6°C</TempHot>202%</TempText>
          </StatusSlot>
          <StatusSlot $w={72}><RingStatus /></StatusSlot>
          <StatusSlot $w={72}><WindowStatus /></StatusSlot>
          <StatusSlot $w={80}><BatteryStatus /></StatusSlot>
          <StatusSlot $w={84}><FaWifi size={32} color="#f0f0f0" /></StatusSlot>
          <StatusSlot $w={54}><Search size={32} color="#f0f0f0" strokeWidth={2.2} /></StatusSlot>
          <StatusSlot $w={80}><ToggleStatus /></StatusSlot>
          <StatusSlot $w={50}><SiriStatus /></StatusSlot>
          <StatusSlot $w={279} $justify="flex-end">
            <Clock><span>Mon Jan 13</span><span>4:05 PM</span></Clock>
          </StatusSlot>
        </MenuRight>
      </MenuBar>

      <Workspace>
        <StageColumn>
          <StageItem $h={302} $gap={27}>
            <NotesThumb />
            <StageBadge $top={215}><NotesIcon size={63} /></StageBadge>
          </StageItem>
          <StageItem $h={291} $gap={41}>
            <DockerThumb />
            <StageBadge $top={228}><DockerIcon size={63} /></StageBadge>
          </StageItem>
          <StageItem $h={210} $gap={9}>
            <TerminalThumb />
            <StageBadge $top={149}><TerminalIcon size={63} /></StageBadge>
          </StageItem>
          <StageItem $h={332} $gap={0}>
            <FinderThumb />
            <StageBadge $top={269}><FinderIcon size={63} /></StageBadge>
          </StageItem>
        </StageColumn>

        <BrowserWindow>
          <Toolbar>
            <Lights>
              <Light $color="#ee6a5f" />
              <Light $color="#f5bd4f" />
              <Light $color="#61c554" />
            </Lights>
            <SidebarGlyph />
            <ToolDivider />
            <ToolIcon $ml={12}><SmallChevron /></ToolIcon>
            <ToolIcon $ml={51}><BackChevron /></ToolIcon>
            <Tab $w={295} $ml={167} $pl={17}>
              <Star size={30} color="#8a8a8a" strokeWidth={1.6} />
              <TabLabel $ml={13}>Start Page</TabLabel>
            </Tab>
            <Tab $w={296} $ml={25} $pl={17}>
              <SiGrafana size={34} color="#f07c2c" />
              <TabLabel $ml={10}>AMF dashboard...</TabLabel>
            </Tab>
            <Tab $w={777} $ml={24} $pl={18} $pr={24} $active>
              <FavClose>×</FavClose>
              <TabLabel $ml={18}>localhost</TabLabel>
              <TabOverviewGlyph />
            </Tab>
            <ToolIcon $ml={372}>
              <svg width="34" height="34" viewBox="0 0 34 34" fill="none" stroke="#777" strokeWidth="2">
                <circle cx="17" cy="17" r="15.5" />
                <path d="M17 8V25M11 19L17 25L23 19" />
              </svg>
            </ToolIcon>
            <ToolIcon $ml={38}><Plus size={36} color="#888" strokeWidth={1.5} /></ToolIcon>
          </Toolbar>

          <NavBar>
            <SiPrometheus size={60} color="#ececec" />
            <Brand>Prometheus</Brand>
            <NavLink>Alerts</NavLink>
            <NavLink>Graph</NavLink>
            <NavLink>Status<Caret /></NavLink>
            <NavLink>Help</NavLink>
            <ThemeToggle>
              <ThemeButton $w={66}><FaSun size={28} /></ThemeButton>
              <ThemeButton $w={50}><FaMoon size={28} /></ThemeButton>
              <ThemeButton $w={65} $active><FaAdjust size={28} /></ThemeButton>
            </ThemeToggle>
          </NavBar>

          <Content>
            <PageTitle>Rules</PageTitle>
            <RulesTable>
              <colgroup>
                <Col $w={1259} />
                <Col $w={428} />
                <Col $w={343} />
                <Col $w={354} />
              </colgroup>
              <tbody>
                <HeadRow>
                  <Cell><GroupTitle><GroupLink>ue-registration-alerts</GroupLink></GroupTitle></Cell>
                  <Cell><GroupTitle>Interval: 1m 0s</GroupTitle></Cell>
                  <Cell><GroupTitle>Never</GroupTitle></Cell>
                  <Cell><GroupTitle>0s</GroupTitle></Cell>
                </HeadRow>
              </tbody>
            </RulesTable>
            <RulesTable>
              <colgroup>
                <Col $w={1259} />
                <Col $w={262} />
                <Col $w={166} />
                <Col $w={343} />
                <Col $w={354} />
              </colgroup>
              <thead>
                <tr>
                  <HeadCell>Rule</HeadCell>
                  <HeadCell>State</HeadCell>
                  <HeadCell>Error</HeadCell>
                  <HeadCell>Last Evaluation</HeadCell>
                  <HeadCell>Evaluation Time</HeadCell>
                </tr>
              </thead>
              <tbody>
                <tr>
                  <BodyCell $shaded>
                    <RuleLine><RuleKey>alert:</RuleKey><RuleLink $ml={48}>ScaleUPFAndSMF</RuleLink></RuleLine>
                    <RuleLine><RuleKey>expr:</RuleKey><RuleLink $ml={48}>ran_ue &gt; 1</RuleLink></RuleLine>
                    <RuleLine><RuleKey>for:</RuleKey> 1m</RuleLine>
                    <RuleLine><RuleKey>labels:</RuleKey></RuleLine>
                    <RuleLine $indent>severity: critical</RuleLine>
                    <RuleLine><RuleKey>annotations:</RuleKey></RuleLine>
                    <RuleLine $indent>description: More than 5 UEs registered for slice {'{{ $labels.slice }}'}</RuleLine>
                  </BodyCell>
                  <BodyCell><Badge>UNKNOWN</Badge></BodyCell>
                  <BodyCell />
                  <BodyCell>Never</BodyCell>
                  <BodyCell>0s</BodyCell>
                </tr>
              </tbody>
            </RulesTable>
          </Content>
        </BrowserWindow>
      </Workspace>

      <Dock>
        {dockLeft.map((entry, i) => (
          <DockEntry
            key={entry.id}
            entry={entry}
            running={entry.running}
            mr={i === dockLeft.length - 1 ? 0 : 20}
          />
        ))}
        <DockDivider $ml={27} $mr={28} />
        {dockRecent.map((entry, i) => (
          <DockEntry key={entry.id} entry={entry} running mr={i === dockRecent.length - 1 ? 0 : 20} />
        ))}
        <DockDivider $ml={31} $mr={25} />
        {dockFiles.map((entry) => (
          <DockEntry key={entry.id} entry={entry} />
        ))}
      </Dock>
    </Desktop>
  );
}
